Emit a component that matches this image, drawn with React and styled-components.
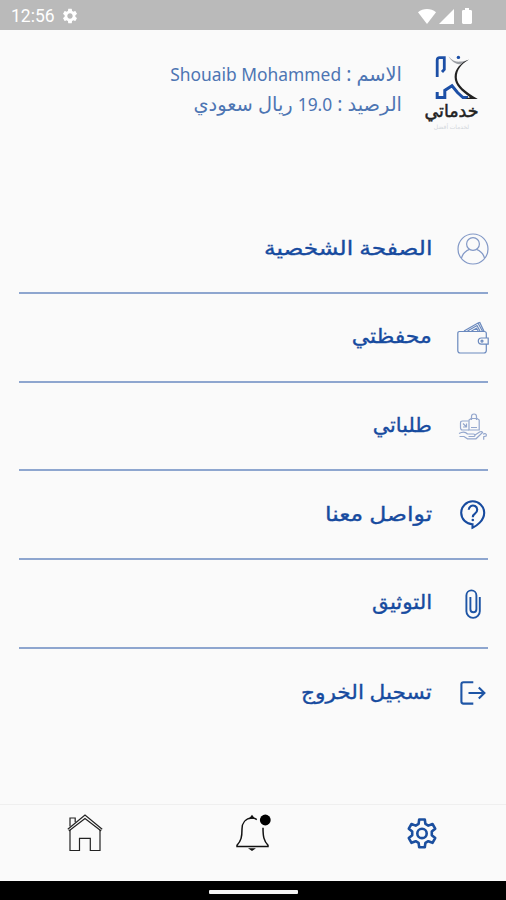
import styled, { createGlobalStyle } from "styled-components";
import { MdSettings } from "react-icons/md";

const GlobalStyle = createGlobalStyle`
  * {
    box-sizing: border-box;
  }

  body {
    margin: 0;
    background: #fafafa;
  }
`;

const Screen = styled.div`
  display: flex;
  flex-direction: column;
  width: 506px;
  height: 900px;
  overflow: hidden;
  background: #fafafa;
  color: #1b4f9f;
  font-family: "Noto Sans", "DejaVu Sans", sans-serif;
`;

const StatusBar = styled.div`
  display: flex;
  flex: none;
  align-items: center;
  height: 30px;
  padding: 2px 34px 0 11px;
  background: #bababa;
  color: #fff;
  font-family: Roboto, sans-serif;
  font-size: 17.5px;
`;

const Clock = styled.span`
  margin-right: 6px;
`;

const StatusIcons = styled.div`
  display: flex;
  align-items: center;
  gap: 3px;
  margin-left: auto;

  svg:last-child {
    margin-left: 5px;
  }
`;

const Header = styled.header`
  display: flex;
  flex: none;
  gap: 22px;
  height: 175.6px;
  padding: 25px 27px 0 0;
  direction: rtl;
`;

const Account = styled.div`
  padding-top: 4px;
  color: #4d75b3;
`;

const AccountLine = styled.div`
  height: 30px;
  font-size: 19.4px;
  line-height: 30px;
  white-space: nowrap;
`;

const Value = styled.span`
  font-size: ${(props) => props.$size}px;
`;

const Brand = styled.div`
  display: flex;
  flex-direction: column;
  align-items: flex-start;
  width: 55px;
`;

const BrandName = styled.div`
  align-self: center;
  margin-top: -5px;
  color: #222;
  font-size: 17.5px;
  font-weight: 500;
  line-height: 24px;
  white-space: nowrap;
  -webkit-text-stroke: 0.5px #222;
`;

const Tagline = styled.div`
  align-self: center;
  margin-top: 1px;
  color: #d3d7dc;
  font-size: 6px;
  line-height: 8px;
  white-space: nowrap;
`;

const Menu = styled.nav`
  flex: 1;
  padding: 0 18px 0 19px;
  direction: rtl;
`;

const MenuItem = styled.div`
  display: flex;
  align-items: center;
  gap: 24px;
  height: 88.6px;
  border-bottom: ${(props) => (props.$last ? "none" : "2px solid #8ea6cf")};
`;

const IconBox = styled.div`
  display: flex;
  flex: none;
  align-items: center;
  justify-content: center;
  width: 33px;
  height: 38px;
  margin-right: -1px;
  padding-top: 1px;
`;

const Label = styled.span`
  padding-bottom: 2px;
  color: #174b9f;
  font-size: 20px;
  font-weight: 500;
  line-height: 34px;
  -webkit-text-stroke: 0.35px #174b9f;
  white-space: nowrap;
  transform: scaleX(${(props) => props.$stretch});
  transform-origin: right center;
`;

const TabBar = styled.div`
  display: grid;
  flex: none;
  grid-template-columns: repeat(3, 1fr);
  height: 77px;
  padding: 9px 0 0 1px;
  border-top: 1px solid #efefef;
  justify-items: center;
`;

const Tab = styled.div`
  display: flex;
  align-items: center;
  height: 38px;
`;

const SystemBar = styled.div`
  display: flex;
  flex: none;
  justify-content: center;
  height: 19px;
  padding-top: 9px;
  background: #000;
`;

const HomeHandle = styled.div`
  width: 89px;
  height: 3.5px;
  border-radius: 1px;
  background: #f4f4f4;
`;

function WifiIcon() {
  return (
    <svg width="18" height="15" viewBox="0 0 18 15" fill="#fff">
      <path d="M0 3.2C5 -1 13 -1 18 3.2L9 15z" />
    </svg>
  );
}

function SignalIcon() {
  return (
    <svg width="15" height="15" viewBox="0 0 15 15" fill="#fff">
      <path d="M15 0v15H0z" />
    </svg>
  );
}

function BatteryIcon() {
  return (
    <svg width="10" height="16" viewBox="0 0 10 16" fill="#fff">
      <path d="M3 0h4v2h2.2l.8 1v12l-1 1H1l-1-1V3l.8-1H3z" />
    </svg>
  );
}

function LogoMark() {
  return (
    <svg width="44" height="48" viewBox="0 0 44 48" fill="none">
      <path d="M2.2 22V5q0-2.4 2.4-2.4h4.7V14.5L7 17" stroke="#1c4fa6" strokeWidth="2.8" />
      <path d="M2.2 37v5.6h7.6V35.4L17 30.8l5.5 6.7 5.5 5.1h5" stroke="#1c4fa6" strokeWidth="3" />
      <circle cx="23.4" cy="2.4" r="1.7" fill="#1c4fa6" />
      <path d="M13.5 1.2c3.2 4.2 7.5 5.7 11.5 5.4 3 0 5.6-.8 8.6-1.8-4 2.8-6.6 4.2-9.4 4.4-4-.2-8-3.400-10.700-8z" fill="#9b9ea3" />
      <path d="M34 4.600C26.500 9 21.600 15 21.800 22.500c.2 7.500 8 13.900 21 21.500H30l5-1.800C27 36.500 19.600 30 19.600 22 19.600 14 26 7.500 34 4.600z" fill="#222" />
    </svg>
  );
}

function ProfileIcon() {
  return (
    <svg width="32" height="32" viewBox="0 0 32 32" fill="none" stroke="#8298c6" strokeWidth="1.2">
      <circle cx="16" cy="16" r="15" />
      <circle cx="16" cy="11" r="6.4" />
      <path d="M4.5 25c1.2-4.2 4-7 8-8.600M27.5 25c-1.200-4.200-4-7-8-8.600" />
    </svg>
  );
}

function WalletIcon() {
  return (
    <svg width="32" height="34" viewBox="0 0 32 34" fill="none" stroke="#6a89be" strokeWidth="1.2">
      <path d="M29.3 17v-4.500q0-2-2-2H2.600q-1.800 0-1.800 2v17q0 2.500 2.400 2.500h23.600q2.500 0 2.500-2.500V23" />
      <path d="M7 10L21 2l4.500 8.200M10.500 10l9.500-5.400 3 5.400M14.500 10l5-2.800 1.700 2.800M21 2l1.800-.5 4.200 8.700" />
      <path d="M31.200 17h-6.800a3.100 3.100 0 0 0 0 6.200h6.800z" />
      <circle cx="25" cy="20.100" r="1" />
    </svg>
  );
}

function OrdersIcon() {
  return (
    <svg width="30" height="30" viewBox="0 0 30 30" fill="none" stroke="#94a7cd" strokeWidth="1.2">
      <path d="M11 18V8l2-1.500h6.200l2 1.500v10zM13.500 8V4.500Q13.500 2 16 2t2.500 2.500V8" />
      <path d="M10.500 9H4.500Q2.500 9 2.500 11v4.500q0 2.500 2 2.500h6.500M5 11.500l3.500 3.500M8.500 11.500v3.500H5M13 15.500h6" />
      <path d="M1 21.5c3.500-2 6.500-1.800 8.500.5h6c2 0 2 2.500 0 2.500h-5M17 23l5-3.200q2-.7 2.600.6L18 26.800H9.500L6 24.500H1.500M25 22.200c2-1.500 4 0 3.200 1.800l-2.500.8v3" />
    </svg>
  );
}

function HelpIcon() {
  return (
    <svg width="26" height="30" viewBox="0 0 26 30" fill="none" stroke="#174b9f" strokeWidth="2.1">
      <path d="M12.5 24.3v3.400c3.700-1.500 11.700-7 11.700-15a11.500 11.500 0 1 0-11.700 11.600z" />
      <path d="M8.800 9.800a4.200 4.200 0 1 1 6.400 3.500c-1.700 1.100-2.400 1.800-2.400 3.900" />
      <circle cx="12.800" cy="20" r="1.300" fill="#174b9f" stroke="none" />
    </svg>
  );
}

function ClipIcon() {
  return (
    <svg width="16" height="30" viewBox="0 0 16 30" fill="none" stroke="#1e55a5" strokeWidth="1.9">
      <path d="M14.8 8v14.200a6.700 6.700 0 0 1-13.400 0V6.400a5 5 0 0 1 10 0v13.800a3 3 0 0 1-6 0V8" />
    </svg>
  );
}

function LogoutIcon() {
  return (
    <svg width="26" height="24" viewBox="0 0 26 24" fill="none" stroke="#1e55a5" strokeWidth="2.1">
      <path d="M13.3 1.2H3.500Q1.400 1.200 1.400 3.300v17.200q0 2.100 2.100 2.100h9.800M8.500 12h16M18.800 6.400l5.600 5.600-5.600 5.600" />
    </svg>
  );
}

function HomeIcon() {
  return (
    <svg width="36" height="38" viewBox="0 0 36 38" fill="none" stroke="#222" strokeWidth="1.2">
      <path d="M.8 15.2L18 1l17.200 14.200M1.800 17L18 4.500 34.200 17" />
      <path d="M3 15.800v20.700h9.500V24.300h10.800v12.200H33V15.800M3 12.600V4h5.200v4.300" />
    </svg>
  );
}

function BellIcon() {
  return (
    <svg width="36" height="38" viewBox="0 0 36 38" fill="none" stroke="#111" strokeWidth="1.5">
      <path d="M21.8 5.600Q19.500 4 17 4.100C10.500 4.500 7 9 7 15c0 8-.8 11.500-5 16.300v1.200h31v-1.200c-4.200-4.500-5-8.800-5-17.500" />
      <path d="M15.500 4l1.500-2 1.500 2z" fill="#111" />
      <path d="M15.500 35h3l-1.500 1z" fill="#111" />
      <circle cx="30.300" cy="6" r="5.400" fill="#000" stroke="none" />
    </svg>
  );
}

function GearIcon() {
  return (
    <svg width="30" height="31" viewBox="0 0 30 31" fill="none" stroke="#1b4f9f" strokeWidth="2.6" strokeLinejoin="round">
      <path d="M12.2 1.500h5.600l.6 4.400 2.900 1.700 4.200-1.600 2.700 4.700-3.400 2.900v3.600l3.400 2.900-2.700 4.700-4.200-1.600-2.900 1.700-.6 4.400h-5.600l-.6-4.400-2.900-1.700-4.200 1.600-2.700-4.700 3.400-2.900v-3.600l-3.400-2.900 2.700-4.700 4.200 1.600 2.900-1.700z" />
      <circle cx="15" cy="15.400" r="4.700" />
    </svg>
  );
}

// stretch widens each label, since Arabic letters cannot take letter-spacing
const menuItems = [
  { label: "الصفحة الشخصية", icon: <ProfileIcon />, stretch: 1.167 },
  { label: "محفظتي", icon: <WalletIcon />, stretch: 1.1 },
  { label: "طلباتي", icon: <OrdersIcon />, stretch: 1.04 },
  { label: "تواصل معنا", icon: <HelpIcon />, stretch: 1.175 },
  { label: "التوثيق", icon: <ClipIcon />, stretch: 1.07 },
  { label: "تسجيل الخروج", icon: <LogoutIcon />, stretch: 1.083 },
];

export default function App() {
  return (
    <Screen>
      <GlobalStyle />
      <StatusBar>
        <Clock>12:56</Clock>
        <MdSettings size={18} />
        <StatusIcons>
          <WifiIcon />
          <SignalIcon />
          <BatteryIcon />
        </StatusIcons>
      </StatusBar>
      <Header>
        <Brand>
          <LogoMark />
          <BrandName>خدماتي</BrandName>
          <Tagline>لخدمات أفضل</Tagline>
        </Brand>
        <Account>
          <AccountLine>
            الاسم : <Value $size={17.4}>Shouaib Mohammed</Value>
          </AccountLine>
          <AccountLine>
            الرصيد : <Value $size={17.4}>19.0</Value> ريال سعودي
          </AccountLine>
        </Account>
      </Header>
      <Menu>
        {menuItems.map((item, index) => (
          <MenuItem key={item.label} $last={index === menuItems.length - 1}>
            <IconBox>{item.icon}</IconBox>
            <Label $stretch={item.stretch}>{item.label}</Label>
          </MenuItem>
        ))}
      </Menu>
      <TabBar>
        <Tab>
          <HomeIcon />
        </Tab>
        <Tab>
          <BellIcon />
        </Tab>
        <Tab>
          <GearIcon />
        </Tab>
      </TabBar>
      <SystemBar>
        <HomeHandle />
      </SystemBar>
    </Screen>
  );
}
